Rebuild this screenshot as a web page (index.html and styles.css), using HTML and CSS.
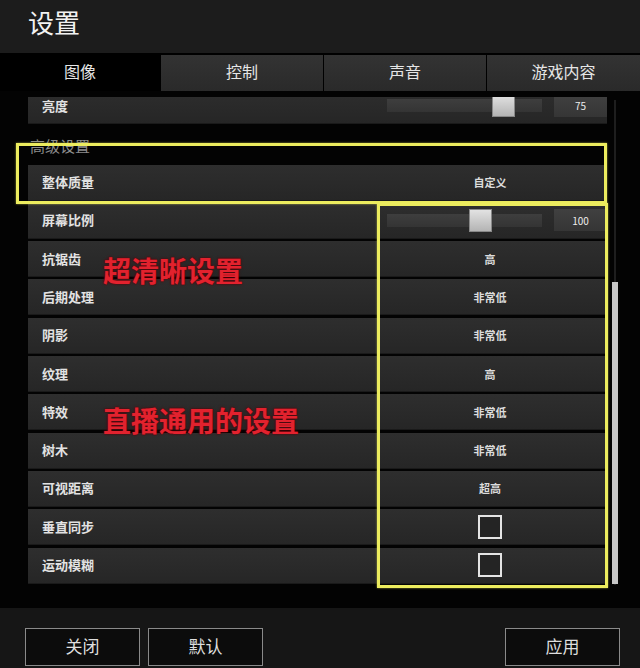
FILE: index.html
```html
<!DOCTYPE html>
<html lang="zh-CN">
<head>
  <meta charset="UTF-8" />
  <meta name="viewport" content="width=device-width, initial-scale=1.0"/>
  <title>设置</title>
  <link rel="stylesheet" href="styles.css">
</head>
<body>
  <header class="header">设置</header>

  <nav class="tabs">
    <div class="tab active">图像</div>
    <div class="tab">控制</div>
    <div class="tab">声音</div>
    <div class="tab">游戏内容</div>
  </nav>

  <main class="content">
    <div class="list">
      <div class="rows">
        <div class="row">
          <span class="label">亮度</span>
          <div class="value slider-cell">
            <div class="track"><div class="thumb" style="left: 105px"></div></div>
            <div class="num">75</div>
          </div>
        </div>

        <div class="section">高级设置</div>

        <div class="row">
          <span class="label">整体质量</span>
          <div class="value">自定义</div>
        </div>
        <div class="row">
          <span class="label">屏幕比例</span>
          <div class="value slider-cell">
            <div class="track"><div class="thumb" style="left: 82px"></div></div>
            <div class="num">100</div>
          </div>
        </div>
        <div class="row"><span class="label">抗锯齿</span><div class="value">高</div></div>
        <div class="row"><span class="label">后期处理</span><div class="value">非常低</div></div>
        <div class="row"><span class="label">阴影</span><div class="value">非常低</div></div>
        <div class="row"><span class="label">纹理</span><div class="value">高</div></div>
        <div class="row"><span class="label">特效</span><div class="value">非常低</div></div>
        <div class="row"><span class="label">树木</span><div class="value">非常低</div></div>
        <div class="row"><span class="label">可视距离</span><div class="value">超高</div></div>
        <div class="row">
          <span class="label">垂直同步</span>
          <div class="value"><span class="check"></span></div>
        </div>
        <div class="row">
          <span class="label">运动模糊</span>
          <div class="value"><span class="check"></span></div>
        </div>
      </div>
    </div>

    <div class="scrollbar"><div class="scroll-thumb"></div></div>

    <!-- annotations drawn over the screenshot -->
    <div class="mark mark-top"></div>
    <div class="mark mark-side"></div>
    <div class="note note-1">超清晰设置</div>
    <div class="note note-2">直播通用的设置</div>
  </main>

  <footer class="footer">
    <button class="btn">关闭</button>
    <button class="btn">默认</button>
    <button class="btn btn-apply">应用</button>
  </footer>
</body>
</html>
```

FILE: styles.css
```css
* {
  box-sizing: border-box;
}
body {
  margin: 0;
  width: 640px;
  height: 668px;
  overflow: hidden;
  background: #000;
  color: #e4e4e4;
  font-family: "Noto Sans CJK SC", "Noto Sans", sans-serif;
}
.header {
  height: 53px;
  padding: 6px 0 0 28px;
  font-size: 26px;
  line-height: 32px;
  color: #f2f2f2;
  background: #1c1c1c;
}
.tabs {
  height: 38px;
  display: grid;
  grid-template-columns: 160px 162px 162px 1fr;
  gap: 1px;
  background: #000;
}
.tab {
  margin-top: 2px;
  padding-bottom: 4px;
  display: flex;
  align-items: center;
  justify-content: center;
  font-size: 16px;
  color: #e6e6e6;
  background: linear-gradient(#333, #2a2a2a);
}
.tab.active {
  margin-top: 0;
  padding-bottom: 2px;
  background: #000;
}
.content {
  position: relative;
  height: 517px;
  display: flex;
  background: #030303;
}
.list {
  margin: 6px 0 0 28px;
  width: 579px;
  height: 492px;
  overflow: hidden;
}
.rows {
  margin-top: -9px;
  display: flex;
  flex-direction: column;
  gap: 2.3px;
}
.row {
  height: 36px;
  display: flex;
  align-items: center;
  background: linear-gradient(#2e2e2e, #262626);
  border-bottom: 1px solid #1a1a1a;
}
.label {
  flex: 1;
  padding-left: 14px;
  font-size: 13px;
  line-height: 14px;
  font-weight: bold;
  color: #e2e2e2;
}
.value {
  width: 220px;
  padding-right: 14px;
  display: flex;
  align-items: center;
  justify-content: center;
  font-size: 11px;
  font-weight: bold;
  color: #dcdcdc;
}
.slider-cell {
  padding-right: 0;
  justify-content: space-between;
}
.track {
  position: relative;
  width: 155px;
  height: 13px;
  background: linear-gradient(#3e3e3e, #343434);
}
.thumb {
  position: absolute;
  top: -5px;
  width: 23px;
  height: 23px;
  background: linear-gradient(#e2e2e2, #b4b4b4);
  border: 1px solid #888;
}
.num {
  width: 53px;
  height: 22px;
  display: flex;
  align-items: center;
  justify-content: center;
  font-size: 10px;
  font-weight: normal;
  color: #eee;
  background: linear-gradient(#404040, #353535);
}
.check {
  width: 24px;
  height: 24px;
  border: 2px solid #e4e4e4;
  background: #242424;
}
.section {
  height: 36px;
  padding: 10px 0 0 2px;
  font-size: 15px;
  line-height: 20px;
  color: #8c8c8c;
}
.scrollbar {
  margin: 9px 0 0 5px;
  width: 6px;
  height: 485px;
  background: linear-gradient(90deg, transparent 2px, #1e1e1e 2px, #1e1e1e 4px, transparent 4px);
}
.scroll-thumb {
  margin-top: 182px;
  height: 302px;
  background: #c6c6c6;
}
.mark {
  position: absolute;
  border: 3px solid #ecec5e;
  box-shadow: 0 0 2px rgba(236, 236, 94, 0.6);
}
.mark-top {
  left: 16px;
  top: 52px;
  width: 591px;
  height: 61px;
}
.mark-side {
  left: 377px;
  top: 112px;
  width: 231px;
  height: 385px;
}
.note {
  position: absolute;
  left: 103px;
  font-size: 28px;
  line-height: 32px;
  font-weight: bold;
  color: #e2222e;
  text-shadow: 0 0 3px #5a0008, 0 0 1px #5a0008;
}
.note-1 {
  top: 163px;
}
.note-2 {
  top: 313px;
}
.footer {
  height: 60px;
  padding: 20px 20px 0 25px;
  display: flex;
  gap: 8px;
  background: #161616;
}
.btn {
  width: 115px;
  height: 38px;
  padding: 0 0 3px;
  font-family: inherit;
  font-size: 17px;
  color: #dedede;
  background: #0c0c0c;
  border: 1px solid #8a8a8a;
}
.btn-apply {
  margin-left: auto;
}
```
